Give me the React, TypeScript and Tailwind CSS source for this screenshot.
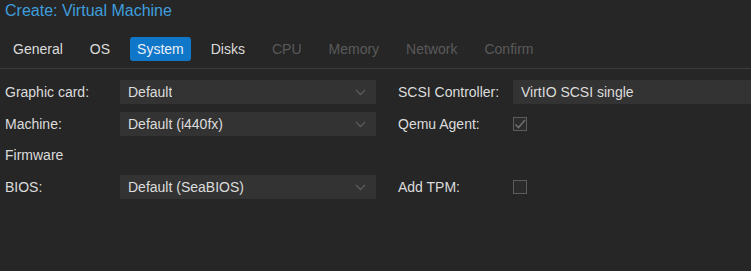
import type React from "react"

const TABS: { name: string; active?: boolean; disabled?: boolean }[] = [
  { name: "General" },
  { name: "OS" },
  { name: "System", active: true },
  { name: "Disks" },
  { name: "CPU", disabled: true },
  { name: "Memory", disabled: true },
  { name: "Network", disabled: true },
  { name: "Confirm", disabled: true },
]

const Chevron = () => (
  <svg width="11" height="7" viewBox="0 0 11 7" className="shrink-0">
    <path d="M1 1 L5.5 5.5 L10 1" fill="none" stroke="#5a5a5a" strokeWidth="1.3" />
  </svg>
)

const Select: React.FC<{ value: string; chevron?: boolean }> = ({ value, chevron = true }) => (
  <div className="flex h-6 flex-1 items-center justify-between bg-[#333333] pl-2 pr-[10px]">
    <span className="truncate text-[14px] text-[#dcdcdc]">{value}</span>
    {chevron && <Chevron />}
  </div>
)

const Checkbox: React.FC<{ checked?: boolean }> = ({ checked }) => (
  <div className="flex h-[14px] w-[14px] items-center justify-center border border-[#5c5c5c] bg-[#2b2b2b]">
    {checked && (
      <svg width="12" height="12" viewBox="0 0 12 12">
        <path d="M1.5 6.5 L4.5 9.5 L11 2" fill="none" stroke="#6e6e6e" strokeWidth="1.6" />
      </svg>
    )}
  </div>
)

const Label: React.FC<{ children: React.ReactNode }> = ({ children }) => (
  <div className="w-[115px] shrink-0 text-[14px] text-[#dcdcdc]">{children}</div>
)

export default function App() {
  return (
    <div
      className="h-[271px] w-[751px] overflow-hidden bg-[#262626]"
      style={{ fontFamily: '"Liberation Sans", Arial, sans-serif' }}
    >
      <div className="flex h-[21px] items-center px-[5px] text-[16px] text-[#3e9ede]">Create: Virtual Machine</div>

      <div className="mt-4 flex gap-[13px] pl-[6px] pr-[5px]">
        {TABS.map((t) => (
          <div
            key={t.name}
            className={`flex h-6 items-center rounded-[3px] px-[7px] text-[14px] ${
              t.active ? "bg-[#1076c8] text-[#e8f0f8]" : t.disabled ? "text-[#5a5a5a]" : "text-[#dcdcdc]"
            }`}
          >
            {t.name}
          </div>
        ))}
      </div>

      <div className="mt-[7px] h-px bg-[#3c3c3c]" />

      <div className="flex gap-[22px] px-[5px] pt-[11px]">
        <div className="flex w-[371px] shrink-0 flex-col gap-2">
          <div className="flex h-6 items-center">
            <Label>Graphic card:</Label>
            <Select value="Default" />
          </div>
          <div className="flex h-6 items-center">
            <Label>Machine:</Label>
            <Select value="Default (i440fx)" />
          </div>
          <div className="flex h-[23px] items-center">
            <Label>Firmware</Label>
          </div>
          <div className="flex h-6 items-center">
            <Label>BIOS:</Label>
            <Select value="Default (SeaBIOS)" />
          </div>
        </div>

        <div className="flex flex-1 flex-col gap-2">
          <div className="flex h-6 items-center">
            <Label>SCSI Controller:</Label>
            <div className="-mr-[5px] flex flex-1">
              <Select value="VirtIO SCSI single" chevron={false} />
            </div>
          </div>
          <div className="flex h-6 items-center">
            <Label>Qemu Agent:</Label>
            <Checkbox checked />
          </div>
          <div className="h-[23px]" />
          <div className="flex h-6 items-center">
            <Label>Add TPM:</Label>
            <Checkbox />
          </div>
        </div>
      </div>
    </div>
  )
}
